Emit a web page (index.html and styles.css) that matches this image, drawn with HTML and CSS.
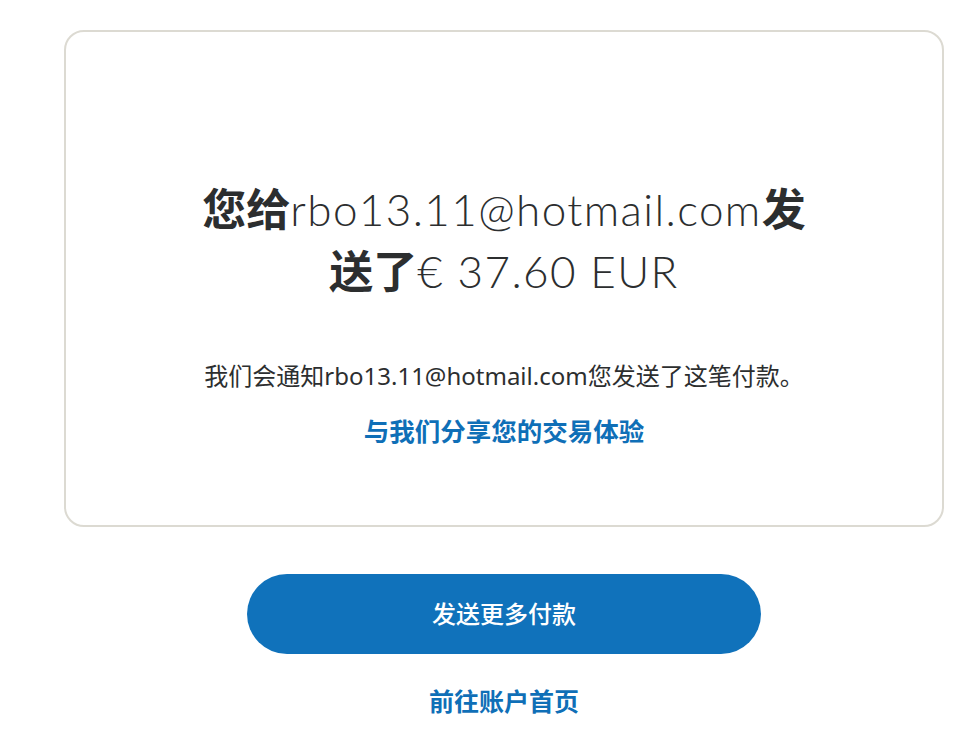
FILE: index.html
```html
<!DOCTYPE html>
<html lang="zh-CN">
<head>
  <meta charset="UTF-8" />
  <meta name="viewport" content="width=device-width, initial-scale=1.0"/>
  <title>付款已发送</title>
  <link rel="stylesheet" href="styles.css">
</head>
<body>
  <div class="page">
    <div class="card">
      <h1 class="headline">
        <b>您给</b><span class="latin">rbo13.11@hotmail.com</span><b>发送了</b><span class="latin">€ 37.60 EUR</span>
      </h1>
      <p class="note">我们会通知rbo13.11@hotmail.com您发送了这笔付款。</p>
      <a class="feedback-link" href="#">与我们分享您的交易体验</a>
    </div>
    <div class="actions">
      <button type="button" class="primary-btn">发送更多付款</button>
      <a class="home-link" href="#">前往账户首页</a>
    </div>
  </div>
</body>
</html>
```

FILE: styles.css
```css
body {
  margin: 0;
  padding: 0;
  background: #fff;
  font-family: "Noto Sans", "Noto Sans CJK SC", sans-serif;
  color: #2c2e2f;
}

.page {
  width: 880px;
  margin-left: 64px;
  padding-top: 30px;
}

.card {
  box-sizing: border-box;
  height: 497px;
  border: 2px solid #dcdad2;
  border-radius: 20px;
  padding-top: 145px;
  text-align: center;
}

.headline {
  max-width: 620px;
  margin: 0 auto;
  font-family: "Lato", "Noto Sans CJK SC", sans-serif;
  font-size: 44px;
  font-weight: 300;
  line-height: 60px;
  color: #2c2e2f;
}

.headline .latin {
  letter-spacing: 1.4px;
}

.headline b {
  font-family: "Noto Sans CJK SC", sans-serif;
  font-weight: 700;
}

.note {
  margin: 57px 0 0;
  font-size: 24px;
  line-height: 36px;
}

.feedback-link {
  display: inline-block;
  margin-top: 19px;
  font-size: 25.5px;
  line-height: 36px;
  font-weight: 700;
  color: #0f6fb7;
  text-decoration: none;
}

.actions {
  display: flex;
  flex-direction: column;
  align-items: center;
  padding-top: 47px;
}

.primary-btn {
  width: 514px;
  height: 80px;
  padding: 0 0 4px;
  border: none;
  border-radius: 40px;
  background-color: #1072bb;
  color: #fff;
  font-family: "Noto Sans CJK SC", sans-serif;
  font-size: 24px;
  font-weight: 500;
  cursor: pointer;
}

.home-link {
  margin-top: 28px;
  font-family: "Noto Sans CJK SC", sans-serif;
  font-size: 25px;
  line-height: 36px;
  font-weight: 700;
  color: #0f6fb7;
  text-decoration: none;
}
```
